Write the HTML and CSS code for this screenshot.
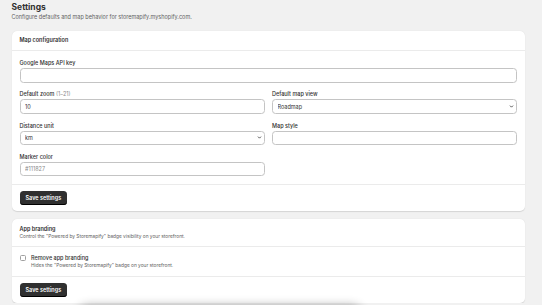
FILE: index.html
```html
<!DOCTYPE html>
<html lang="en">
<head>
  <meta charset="UTF-8" />
  <meta name="viewport" content="width=device-width, initial-scale=1" />
  <title>Settings</title>
  <link rel="stylesheet" href="styles.css">
</head>
<body>
  <div class="page">
    <h1 class="page-title">Settings</h1>
    <p class="page-subtitle">Configure defaults and map behavior for storemapify.myshopify.com.</p>

    <div class="card">
      <div class="card-header">
        <h2 class="card-title">Map configuration</h2>
      </div>
      <div class="card-body form-grid">
        <div class="field field-wide">
          <label class="field-label">Google Maps API key</label>
          <input class="text-input" type="text" />
        </div>
        <div class="field">
          <label class="field-label">Default zoom <span class="muted">(1–21)</span></label>
          <input class="text-input" type="text" value="10" />
        </div>
        <div class="field">
          <label class="field-label">Default map view</label>
          <div class="select-wrap">
            <select class="text-input select-input">
              <option>Roadmap</option>
            </select>
            <svg class="chevron" viewBox="0 0 10 10"><path d="M2.5 3.8 5 6.3 7.5 3.8" fill="none" stroke="#303030" stroke-width="1.6" stroke-linecap="round" stroke-linejoin="round"/></svg>
          </div>
        </div>
        <div class="field">
          <label class="field-label">Distance unit</label>
          <div class="select-wrap">
            <select class="text-input select-input">
              <option>km</option>
            </select>
            <svg class="chevron" viewBox="0 0 10 10"><path d="M2.5 3.8 5 6.3 7.5 3.8" fill="none" stroke="#303030" stroke-width="1.6" stroke-linecap="round" stroke-linejoin="round"/></svg>
          </div>
        </div>
        <div class="field">
          <label class="field-label">Map style</label>
          <input class="text-input" type="text" />
        </div>
        <div class="field">
          <label class="field-label">Marker color</label>
          <input class="text-input" type="text" placeholder="#111827" />
        </div>
      </div>
      <div class="card-footer">
        <button class="save-btn">Save settings</button>
      </div>
    </div>

    <div class="card">
      <div class="card-header">
        <h2 class="card-title">App branding</h2>
        <p class="card-subtitle">Control the "Powered by Storemapify" badge visibility on your storefront.</p>
      </div>
      <div class="card-body check-row">
        <span class="checkbox"></span>
        <div>
          <div class="check-label">Remove app branding</div>
          <div class="check-help">Hides the "Powered by Storemapify" badge on your storefront.</div>
        </div>
      </div>
      <div class="card-footer">
        <button class="save-btn">Save settings</button>
      </div>
    </div>
  </div>
  <div class="toast-shadow"></div>
</body>
</html>
```

FILE: styles.css
```css
body {
  font-family: Inter, "Liberation Sans", sans-serif;
  background: #f1f1f1;
  color: #303030;
  margin: 0;
  overflow: hidden;
}
.page {
  padding: 1px 17px 0 11.5px;
}
.page-title {
  margin: 0;
  font-size: 8.5px;
  line-height: 12px;
  font-weight: 700;
}
.page-subtitle {
  margin: 0;
  font-size: 5.5px;
  line-height: 9px;
  color: #616161;
}
.card {
  background: #fff;
  border-radius: 5px;
  box-shadow: 0 0.5px 1px rgba(0, 0, 0, 0.12);
  margin-top: 8.5px;
}
.card + .card {
  margin-top: 8.6px;
}
.card-header {
  padding: 6.5px 8px 6px;
  border-bottom: 1px solid #ebebeb;
}
.card-title {
  margin: 0;
  font-size: 5.5px;
  line-height: 7px;
  font-weight: 600;
}
.card-subtitle {
  margin: 0;
  font-size: 4.8px;
  line-height: 7px;
  color: #616161;
}
.card-body {
  padding: 8px 8px 8px;
  border-bottom: 1px solid #ebebeb;
}
.form-grid {
  display: grid;
  grid-template-columns: 1fr 1fr;
  column-gap: 7.5px;
  row-gap: 7.8px;
}
.field-wide {
  grid-column: 1 / 3;
}
.field-label {
  display: block;
  font-size: 5.5px;
  line-height: 8px;
  font-weight: 500;
  margin-bottom: 1px;
}
.muted {
  color: #8a8a8a;
  font-weight: 400;
}
.text-input {
  display: block;
  box-sizing: border-box;
  width: 100%;
  height: 14.5px;
  margin: 0;
  padding: 0 4.5px;
  border: 1px solid #c4c4c4;
  border-radius: 3.5px;
  background: #fff;
  font-family: inherit;
  font-size: 5.5px;
  color: #303030;
  outline: none;
}
.text-input::placeholder {
  color: #8a8a8a;
}
.select-wrap {
  position: relative;
}
.select-input {
  appearance: none;
  -webkit-appearance: none;
}
.chevron {
  position: absolute;
  right: 3px;
  top: 4.5px;
  width: 5px;
  height: 5px;
}
.check-row {
  display: flex;
  gap: 5px;
  padding: 8px 8px 7.3px 8.5px;
}
.checkbox {
  flex: none;
  box-sizing: border-box;
  width: 6px;
  height: 6px;
  margin-top: 0.5px;
  border: 1px solid #a0a0a0;
  border-radius: 1.5px;
}
.check-label {
  font-size: 5.5px;
  line-height: 7px;
  font-weight: 500;
}
.check-help {
  font-size: 4.8px;
  line-height: 7px;
  color: #616161;
}
.card-footer {
  padding: 5.8px 8px 6px;
}
.save-btn {
  display: block;
  height: 13.6px;
  padding: 0 6px;
  border: none;
  border-radius: 3.5px;
  background: #303030;
  color: #fff;
  font-family: inherit;
  font-size: 5.5px;
  font-weight: 600;
  box-shadow: inset 0 -1px 0 #000;
}
.toast-shadow {
  position: fixed;
  left: 80px;
  width: 280px;
  top: 307px;
  height: 20px;
  border-radius: 8px;
  box-shadow: 0 0 10px 2px rgba(0, 0, 0, 0.3);
}
```
